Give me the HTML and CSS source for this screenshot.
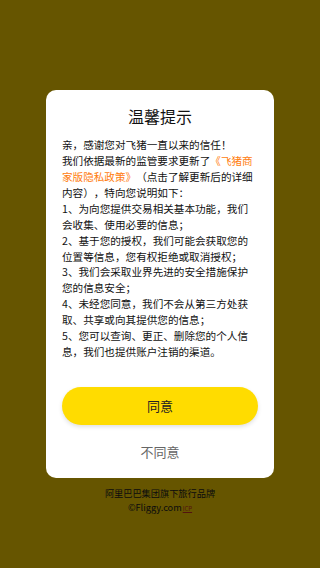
FILE: index.html
```html
<!DOCTYPE html>
<html lang="zh-CN">
<head>
<meta charset="utf-8">
<meta name="viewport" content="width=device-width, initial-scale=1">
<title>温馨提示</title>
<link rel="stylesheet" href="styles.css">
</head>
<body>
<div class="page">
  <div class="footer">
    <div class="footer-line">阿里巴巴集团旗下旅行品牌</div>
    <div class="footer-line">©Fliggy.com<span class="footer-red">ICP</span></div>
  </div>
</div>
<div class="overlay">
  <div class="dialog">
    <h1 class="title">温馨提示</h1>
    <div class="body">
      <p class="line">亲，感谢您对飞猪一直以来的信任！</p>
      <p class="line">我们依据最新的监管要求更新了<span class="link">《飞猪商家版隐私政策》</span>（点击了解更新后的详细内容），特向您说明如下：</p>
      <p class="line">1、为向您提供交易相关基本功能，我们会收集、使用必要的信息；</p>
      <p class="line">2、基于您的授权，我们可能会获取您的位置等信息，您有权拒绝或取消授权；</p>
      <p class="line">3、我们会采取业界先进的安全措施保护您的信息安全；</p>
      <p class="line">4、未经您同意，我们不会从第三方处获取、共享或向其提供您的信息；</p>
      <p class="line">5、您可以查询、更正、删除您的个人信息，我们也提供账户注销的渠道。</p>
    </div>
    <button class="agree" type="button">同意</button>
    <button class="disagree" type="button">不同意</button>
  </div>
</div>
</body>
</html>
```

FILE: styles.css
```css
* { box-sizing: border-box; }
html, body {
  margin: 0;
  padding: 0;
  height: 100%;
}
body {
  font-family: "Noto Sans CJK SC", "Noto Sans", sans-serif;
  background: #ffd500;
  color: #333;
  text-spacing-trim: space-all;
}
.page {
  min-height: 100vh;
  display: flex;
  flex-direction: column;
  justify-content: flex-end;
  padding-bottom: 52px;
}
.footer {
  text-align: center;
  font-size: 9.2px;
  line-height: 14px;
  color: #222;
}
.footer-red {
  color: #d0302a;
  font-size: 6px;
  text-decoration: underline;
  margin-left: 1px;
}
.overlay {
  position: fixed;
  inset: 0;
  background: rgba(0, 0, 0, 0.6);
  display: flex;
  align-items: center;
  justify-content: center;
}
.dialog {
  width: 228px;
  background: #fff;
  border-radius: 10px;
  padding: 15px 16px 17px;
  display: flex;
  flex-direction: column;
}
.title {
  margin: 0;
  font-size: 16px;
  line-height: 22px;
  font-weight: 400;
  text-align: center;
  color: #111;
}
.body {
  margin: 10px 2px 0 0;
  font-size: 10.6px;
  line-height: 15.9px;
  color: #111;
}
.line {
  margin: 0;
}
.link {
  color: #ff7d0f;
}
.agree {
  margin-top: 27px;
  height: 38px;
  border: none;
  border-radius: 19px;
  background: #ffdc00;
  box-shadow: 0 2px 4px rgba(0, 0, 0, 0.12);
  font-family: inherit;
  font-size: 13px;
  color: #222;
  padding: 0;
}
.disagree {
  margin-top: 18px;
  height: 18px;
  line-height: 18px;
  border: none;
  background: none;
  font-family: inherit;
  font-size: 13px;
  color: #666;
  padding: 0;
}
```
